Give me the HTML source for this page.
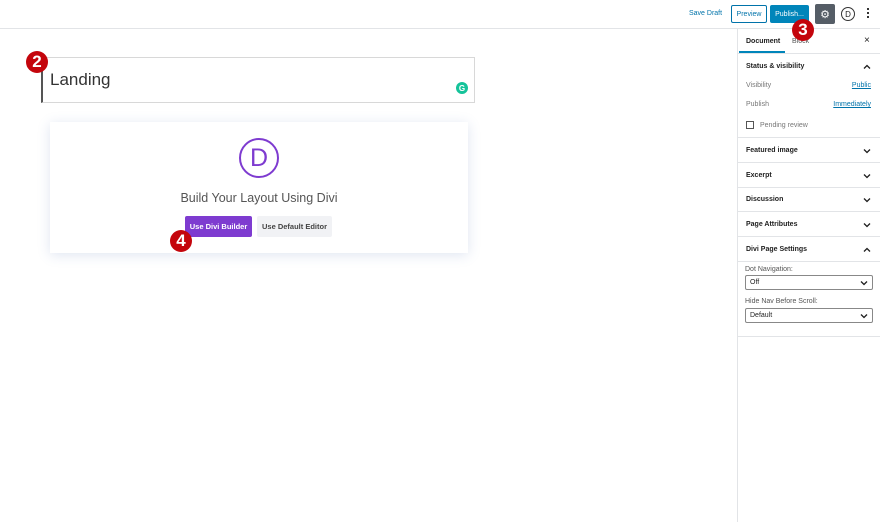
<!DOCTYPE html><html><head><style>
*{box-sizing:border-box;margin:0;padding:0}
body{width:880px;height:522px;background:#fff;font-family:"Liberation Sans",sans-serif;position:relative;overflow:hidden;color:#1e1e1e}
.a{position:absolute}
.c{display:flex;align-items:center;justify-content:center}
.badge{position:absolute;width:22px;height:22px;border-radius:50%;background:#c4050c;color:#fff;font-size:17px;line-height:22px;text-align:center;font-weight:bold}
.sec{position:absolute;left:737px;width:143px;border-bottom:1px solid #e2e4e7;font-size:7px;font-weight:bold;padding-left:9px}
.chev{position:absolute;right:9px;width:8px;height:6px}
</style></head><body>
<svg width="0" height="0" style="position:absolute"><defs>
<symbol id="dn" viewBox="0 0 8 6"><path d="M1 1.5 L4 4.5 L7 1.5" fill="none" stroke="#1e1e1e" stroke-width="1.3"/></symbol>
<symbol id="up" viewBox="0 0 8 6"><path d="M1 4.5 L4 1.5 L7 4.5" fill="none" stroke="#1e1e1e" stroke-width="1.3"/></symbol>
</defs></svg>
<div class="a" style="left:0;top:28px;width:880px;height:1px;background:#e2e4e7"></div>
<div class="a" style="left:689px;top:10px;font-size:7px;color:#0073aa">Save Draft</div>
<div class="a c" style="left:731px;top:5px;width:36px;height:18px;border:1px solid #0073aa;border-radius:2px;font-size:7px;color:#0073aa">Preview</div>
<div class="a c" style="left:770px;top:5px;width:39px;height:18px;background:#0085ba;border-radius:2px;font-size:7px;color:#fff">Publish...</div>
<div class="a c" style="left:815px;top:4px;width:20px;height:20px;background:#555d66;border-radius:2px;color:#fff;font-size:11px">⚙</div>
<div class="a c" style="left:841px;top:7px;width:14px;height:14px;border:1.5px solid #333;border-radius:50%;font-size:8px">D</div>
<div class="a" style="left:867px;top:8px;width:2px;height:2px;background:#333;box-shadow:0 4px #333,0 8px #333"></div>

<div class="a" style="left:737px;top:29px;width:1px;height:493px;background:#e2e4e7"></div>
<div class="a" style="left:737px;top:29px;width:143px;height:25px;border-bottom:1px solid #e2e4e7"></div>
<div class="a" style="left:746px;top:38px;font-size:7px;font-weight:bold">Document</div>
<div class="a" style="left:739px;top:51px;width:46px;height:2px;background:#0085ba"></div>
<div class="a" style="left:792px;top:38px;font-size:7px;color:#555">Block</div>
<div class="a" style="left:864px;top:35px;font-size:10px">×</div>
<div class="sec" style="top:54px;height:84px"><div style="margin-top:9px">Status &amp; visibility</div><svg class="chev" style="top:10px"><use href="#up"/></svg>
<div class="a" style="left:9px;top:28px;font-weight:normal;color:#777">Visibility</div><div class="a" style="right:9px;top:28px;font-weight:normal;color:#0073aa;text-decoration:underline">Public</div>
<div class="a" style="left:9px;top:47px;font-weight:normal;color:#777">Publish</div><div class="a" style="right:9px;top:47px;font-weight:normal;color:#0073aa;text-decoration:underline">Immediately</div>
<div class="a" style="left:9px;top:67px;width:8px;height:8px;border:1px solid #555"></div><div class="a" style="left:23px;top:68px;font-weight:normal;color:#777">Pending review</div></div>
<div class="sec" style="top:138px;height:25px;line-height:25px">Featured image<svg class="chev" style="top:10px"><use href="#dn"/></svg></div>
<div class="sec" style="top:163px;height:25px;line-height:25px">Excerpt<svg class="chev" style="top:10px"><use href="#dn"/></svg></div>
<div class="sec" style="top:188px;height:24px;line-height:24px">Discussion<svg class="chev" style="top:9px"><use href="#dn"/></svg></div>
<div class="sec" style="top:212px;height:25px;line-height:25px">Page Attributes<svg class="chev" style="top:10px"><use href="#dn"/></svg></div>
<div class="sec" style="top:237px;height:25px;line-height:25px">Divi Page Settings<svg class="chev" style="top:10px"><use href="#up"/></svg></div>
<div class="sec" style="top:262px;height:75px;font-weight:normal">
<div class="a" style="left:8px;top:4px;color:#555">Dot Navigation:</div>
<div class="a" style="left:8px;top:13px;width:128px;height:15px;border:1px solid #888;border-radius:2px;padding-left:4px;line-height:13px">Off<svg class="chev" style="right:4px;top:4px"><use href="#dn"/></svg></div>
<div class="a" style="left:8px;top:36px;color:#555">Hide Nav Before Scroll:</div>
<div class="a" style="left:8px;top:46px;width:128px;height:15px;border:1px solid #888;border-radius:2px;padding-left:4px;line-height:13px">Default<svg class="chev" style="right:4px;top:4px"><use href="#dn"/></svg></div>
</div>

<div class="a" style="left:41px;top:57px;width:434px;height:46px;border:1px solid #d8d8d8;border-left:2px solid #555"></div>
<div class="a" style="left:50px;top:70px;font-size:17px;color:#333">Landing</div>
<div class="a c" style="left:456px;top:82px;width:12px;height:12px;border-radius:50%;background:#15c39a;color:#fff;font-size:8px;font-weight:bold">G</div>

<div class="a" style="left:50px;top:122px;width:418px;height:131px;background:#fff;box-shadow:0 2px 12px rgba(80,110,180,.18)"></div>
<div class="a c" style="left:239px;top:138px;width:40px;height:40px;border:2px solid #7e3bd0;border-radius:50%;color:#7e3bd0;font-size:25px">D</div>
<div class="a" style="left:50px;top:191px;width:418px;text-align:center;font-size:12.5px;color:#555">Build Your Layout Using Divi</div>
<div class="a c" style="left:185px;top:216px;width:67px;height:21px;background:#7e3bd0;color:#fff;font-size:7.5px;font-weight:bold;border-radius:2px">Use Divi Builder</div>
<div class="a c" style="left:257px;top:216px;width:75px;height:21px;background:#f1f2f5;color:#444;font-size:7.5px;font-weight:bold;border-radius:2px">Use Default Editor</div>

<div class="badge" style="left:26px;top:51px">2</div>
<div class="badge" style="left:792px;top:19px">3</div>
<div class="badge" style="left:170px;top:230px">4</div>
</body></html>
